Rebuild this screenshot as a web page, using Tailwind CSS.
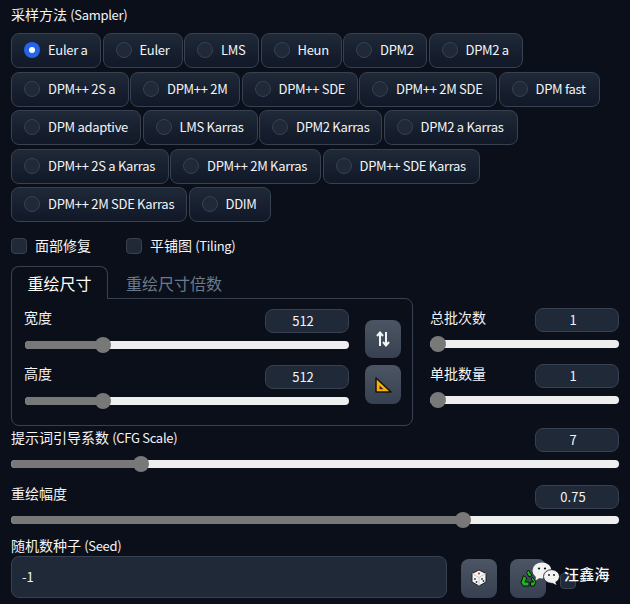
<!DOCTYPE html>
<html lang="zh-CN">
<head>
    <meta charset="UTF-8">
    <title>Sampler settings</title>
    <script src="https://cdn.jsdelivr.net/npm/@tailwindcss/browser@4"></script>
</head>
<body class="bg-[#0b0f19] text-[#f3f4f6] text-[14px] leading-[20px] font-['Noto_Sans_CJK_SC','Noto_Sans',sans-serif] overflow-hidden">
<div class="relative w-[630px] h-[604px] overflow-hidden pl-[11px] pr-[11px] pt-[4px]">

    <!-- Sampler -->
    <div class="h-[20px]">采样方法 <span class="text-[13px] tracking-[-0.3px]">(Sampler)</span></div>
    <div class="mt-[9px] flex flex-col gap-[3.5px] h-[189px] text-[13px] tracking-[-0.3px] whitespace-nowrap">
        <div class="flex gap-[1.5px]">
            <label class="w-[90px] h-[35px] flex items-center gap-[8px] pl-[12px] pb-[1px] rounded-[8px] border border-[#374151] bg-gradient-to-b from-[#1f2937] to-[#111827]"><span class="w-[16px] h-[16px] rounded-full bg-[#2563eb] flex items-center justify-center"><span class="w-[6px] h-[6px] rounded-full bg-white"></span></span>Euler a</label>
            <label class="w-[80px] h-[35px] flex items-center gap-[8px] pl-[12px] pb-[1px] rounded-[8px] border border-[#374151] bg-gradient-to-b from-[#1f2937] to-[#111827]"><span class="w-[16px] h-[16px] rounded-full bg-[#1f2937] border border-[#374151]"></span>Euler</label>
            <label class="w-[75px] h-[35px] flex items-center gap-[8px] pl-[12px] pb-[1px] rounded-[8px] border border-[#374151] bg-gradient-to-b from-[#1f2937] to-[#111827]"><span class="w-[16px] h-[16px] rounded-full bg-[#1f2937] border border-[#374151]"></span>LMS</label>
            <label class="w-[81px] h-[35px] flex items-center gap-[8px] pl-[12px] pb-[1px] rounded-[8px] border border-[#374151] bg-gradient-to-b from-[#1f2937] to-[#111827]"><span class="w-[16px] h-[16px] rounded-full bg-[#1f2937] border border-[#374151]"></span>Heun</label>
            <label class="w-[84px] h-[35px] flex items-center gap-[8px] pl-[12px] pb-[1px] rounded-[8px] border border-[#374151] bg-gradient-to-b from-[#1f2937] to-[#111827]"><span class="w-[16px] h-[16px] rounded-full bg-[#1f2937] border border-[#374151]"></span>DPM2</label>
            <label class="w-[94px] h-[35px] flex items-center gap-[8px] pl-[12px] pb-[1px] rounded-[8px] border border-[#374151] bg-gradient-to-b from-[#1f2937] to-[#111827]"><span class="w-[16px] h-[16px] rounded-full bg-[#1f2937] border border-[#374151]"></span>DPM2 a</label>
        </div>
        <div class="flex gap-[1.5px]">
            <label class="w-[117.5px] h-[35px] flex items-center gap-[8px] pl-[12px] pb-[1px] rounded-[8px] border border-[#374151] bg-gradient-to-b from-[#1f2937] to-[#111827]"><span class="w-[16px] h-[16px] rounded-full bg-[#1f2937] border border-[#374151]"></span>DPM++ 2S a</label>
            <label class="w-[110px] h-[35px] flex items-center gap-[8px] pl-[12px] pb-[1px] rounded-[8px] border border-[#374151] bg-gradient-to-b from-[#1f2937] to-[#111827]"><span class="w-[16px] h-[16px] rounded-full bg-[#1f2937] border border-[#374151]"></span>DPM++ 2M</label>
            <label class="w-[116px] h-[35px] flex items-center gap-[8px] pl-[12px] pb-[1px] rounded-[8px] border border-[#374151] bg-gradient-to-b from-[#1f2937] to-[#111827]"><span class="w-[16px] h-[16px] rounded-full bg-[#1f2937] border border-[#374151]"></span>DPM++ SDE</label>
            <label class="w-[138px] h-[35px] flex items-center gap-[8px] pl-[12px] pb-[1px] rounded-[8px] border border-[#374151] bg-gradient-to-b from-[#1f2937] to-[#111827]"><span class="w-[16px] h-[16px] rounded-full bg-[#1f2937] border border-[#374151]"></span>DPM++ 2M SDE</label>
            <label class="w-[101px] h-[35px] flex items-center gap-[8px] pl-[12px] pb-[1px] rounded-[8px] border border-[#374151] bg-gradient-to-b from-[#1f2937] to-[#111827]"><span class="w-[16px] h-[16px] rounded-full bg-[#1f2937] border border-[#374151]"></span>DPM fast</label>
        </div>
        <div class="flex gap-[1.5px]">
            <label class="w-[130px] h-[35px] flex items-center gap-[8px] pl-[12px] pb-[1px] rounded-[8px] border border-[#374151] bg-gradient-to-b from-[#1f2937] to-[#111827]"><span class="w-[16px] h-[16px] rounded-full bg-[#1f2937] border border-[#374151]"></span>DPM adaptive</label>
            <label class="w-[115px] h-[35px] flex items-center gap-[8px] pl-[12px] pb-[1px] rounded-[8px] border border-[#374151] bg-gradient-to-b from-[#1f2937] to-[#111827]"><span class="w-[16px] h-[16px] rounded-full bg-[#1f2937] border border-[#374151]"></span>LMS Karras</label>
            <label class="w-[123px] h-[35px] flex items-center gap-[8px] pl-[12px] pb-[1px] rounded-[8px] border border-[#374151] bg-gradient-to-b from-[#1f2937] to-[#111827]"><span class="w-[16px] h-[16px] rounded-full bg-[#1f2937] border border-[#374151]"></span>DPM2 Karras</label>
            <label class="w-[134px] h-[35px] flex items-center gap-[8px] pl-[12px] pb-[1px] rounded-[8px] border border-[#374151] bg-gradient-to-b from-[#1f2937] to-[#111827]"><span class="w-[16px] h-[16px] rounded-full bg-[#1f2937] border border-[#374151]"></span>DPM2 a Karras</label>
        </div>
        <div class="flex gap-[1.5px]">
            <label class="w-[157.5px] h-[35px] flex items-center gap-[8px] pl-[12px] pb-[1px] rounded-[8px] border border-[#374151] bg-gradient-to-b from-[#1f2937] to-[#111827]"><span class="w-[16px] h-[16px] rounded-full bg-[#1f2937] border border-[#374151]"></span>DPM++ 2S a Karras</label>
            <label class="w-[151px] h-[35px] flex items-center gap-[8px] pl-[12px] pb-[1px] rounded-[8px] border border-[#374151] bg-gradient-to-b from-[#1f2937] to-[#111827]"><span class="w-[16px] h-[16px] rounded-full bg-[#1f2937] border border-[#374151]"></span>DPM++ 2M Karras</label>
            <label class="w-[157px] h-[35px] flex items-center gap-[8px] pl-[12px] pb-[1px] rounded-[8px] border border-[#374151] bg-gradient-to-b from-[#1f2937] to-[#111827]"><span class="w-[16px] h-[16px] rounded-full bg-[#1f2937] border border-[#374151]"></span>DPM++ SDE Karras</label>
        </div>
        <div class="flex gap-[1.5px]">
            <label class="w-[176px] h-[35px] flex items-center gap-[8px] pl-[12px] pb-[1px] rounded-[8px] border border-[#374151] bg-gradient-to-b from-[#1f2937] to-[#111827]"><span class="w-[16px] h-[16px] rounded-full bg-[#1f2937] border border-[#374151]"></span>DPM++ 2M SDE Karras</label>
            <label class="w-[82px] h-[35px] flex items-center gap-[8px] pl-[12px] pb-[1px] rounded-[8px] border border-[#374151] bg-gradient-to-b from-[#1f2937] to-[#111827]"><span class="w-[16px] h-[16px] rounded-full bg-[#1f2937] border border-[#374151]"></span>DDIM</label>
        </div>
    </div>

    <!-- Checkboxes -->
    <div class="mt-[16px] h-[16px] flex items-center">
        <span class="w-[16px] h-[16px] rounded-[4px] bg-[#1f2937] border border-[#374151]"></span>
        <span class="ml-[8px] w-[91px] -mt-[2px]">面部修复</span>
        <span class="w-[16px] h-[16px] rounded-[4px] bg-[#1f2937] border border-[#374151]"></span>
        <span class="ml-[8px] -mt-[2px]">平铺图 <span class="text-[13px] tracking-[-0.3px]">(Tiling)</span></span>
    </div>

    <!-- Size tabs + batch -->
    <div class="mt-[12px] flex">
        <div class="w-[402px]">
            <div class="flex h-[33px] text-[16px]">
                <div class="relative z-10 w-[97px] h-[33px] rounded-t-[8px] border border-b-0 border-[#374151] bg-[#0b0f19] flex items-center justify-center text-white">重绘尺寸</div>
                <div class="w-[132px] flex items-center justify-center text-[#6b7a8c]">重绘尺寸倍数</div>
            </div>
            <div class="-mt-px h-[128px] rounded-b-[8px] rounded-tr-[8px] border border-[#374151] pl-[13px] pr-[11px] flex gap-[16px]">
                <div class="w-[324px] pt-[10px]">
                    <div class="flex justify-between h-[24px]">
                        <span class="-mt-[2px] -ml-[1px]">宽度</span>
                        <span class="w-[84px] h-[24px] rounded-[8px] bg-[#1f2937] border border-[#374151] flex items-center justify-center pr-[8px] text-[13px]">512</span>
                    </div>
                    <div class="mt-[4px] h-[16px] flex items-center">
                        <div class="relative w-full h-[8px] rounded-full bg-[#eeeeee]">
                            <div class="w-[78px] h-full rounded-l-full bg-[#787878]"></div>
                            <div class="absolute left-[70px] -top-[4px] w-[16px] h-[16px] rounded-full bg-[#787878]"></div>
                        </div>
                    </div>
                    <div class="mt-[12px] flex justify-between h-[24px]">
                        <span class="-mt-[2px] -ml-[1px]">高度</span>
                        <span class="w-[84px] h-[24px] rounded-[8px] bg-[#1f2937] border border-[#374151] flex items-center justify-center pr-[8px] text-[13px]">512</span>
                    </div>
                    <div class="mt-[4px] h-[16px] flex items-center">
                        <div class="relative w-full h-[8px] rounded-full bg-[#eeeeee]">
                            <div class="w-[78px] h-full rounded-l-full bg-[#787878]"></div>
                            <div class="absolute left-[70px] -top-[4px] w-[16px] h-[16px] rounded-full bg-[#787878]"></div>
                        </div>
                    </div>
                </div>
                <div class="pt-[21px] flex flex-col gap-[7px]">
                    <div class="w-[36px] h-[38px] rounded-[8px] bg-gradient-to-b from-[#4b5563] to-[#374151] flex items-center justify-center">
                        <svg width="14" height="16" viewBox="0 0 14 16" fill="none" stroke="#f3f4f6" stroke-width="2"><path d="M4 15V2M1 5 4 1.500 7 5"/><path d="M10 1V14M7 11 10 14.500 13 11"/></svg>
                    </div>
                    <div class="w-[36px] h-[39px] rounded-[8px] bg-gradient-to-b from-[#4b5563] to-[#374151] flex items-center justify-center">
                        <svg width="17" height="16" viewBox="0 0 17 16"><path d="M1 1 16 15H1Z" fill="#ffb000" stroke="#1a1405" stroke-width="1.500" stroke-linejoin="round"/><path d="M4.500 8.500 8.500 12.300H4.500Z" fill="#2a2a2a"/></svg>
                    </div>
                </div>
            </div>
        </div>
        <div class="ml-[17px] w-[189px] pt-[42px]">
            <div class="flex justify-between h-[24px]">
                <span class="-mt-[1px]">总批次数</span>
                <span class="w-[84px] h-[24px] rounded-[8px] bg-[#1f2937] border border-[#374151] flex items-center justify-center pr-[8px] text-[13px]">1</span>
            </div>
            <div class="mt-[4px] h-[16px] flex items-center">
                <div class="relative w-full h-[8px] rounded-full bg-[#eeeeee]">
                    <div class="absolute left-0 -top-[4px] w-[16px] h-[16px] rounded-full bg-[#787878]"></div>
                </div>
            </div>
            <div class="mt-[12px] flex justify-between h-[24px]">
                <span class="-mt-[1px]">单批数量</span>
                <span class="w-[84px] h-[24px] rounded-[8px] bg-[#1f2937] border border-[#374151] flex items-center justify-center pr-[8px] text-[13px]">1</span>
            </div>
            <div class="mt-[4px] h-[16px] flex items-center">
                <div class="relative w-full h-[8px] rounded-full bg-[#eeeeee]">
                    <div class="absolute left-0 -top-[4px] w-[16px] h-[16px] rounded-full bg-[#787878]"></div>
                </div>
            </div>
        </div>
    </div>

    <!-- CFG -->
    <div class="mt-[2px] flex justify-between h-[24px]">
        <span class="-mt-[1px]">提示词引导系数 <span class="text-[13px] tracking-[-0.3px]">(CFG Scale)</span></span>
        <span class="w-[84px] h-[24px] rounded-[8px] bg-[#1f2937] border border-[#374151] flex items-center justify-center pr-[8px] text-[13px]">7</span>
    </div>
    <div class="mt-[4px] h-[16px] flex items-center">
        <div class="relative w-full h-[8px] rounded-full bg-[#eeeeee]">
            <div class="w-[130px] h-full rounded-l-full bg-[#787878]"></div>
            <div class="absolute left-[122px] -top-[4px] w-[16px] h-[16px] rounded-full bg-[#787878]"></div>
        </div>
    </div>

    <!-- Denoising -->
    <div class="mt-[13px] flex justify-between h-[24px]">
        <span class="-mt-[2px]">重绘幅度</span>
        <span class="w-[84px] h-[24px] rounded-[8px] bg-[#1f2937] border border-[#374151] flex items-center justify-center pr-[8px] text-[13px]">0.75</span>
    </div>
    <div class="mt-[3px] h-[16px] flex items-center">
        <div class="relative w-full h-[8px] rounded-full bg-[#eeeeee]">
            <div class="w-[452px] h-full rounded-l-full bg-[#787878]"></div>
            <div class="absolute left-[444px] -top-[4px] w-[16px] h-[16px] rounded-full bg-[#787878]"></div>
        </div>
    </div>

    <!-- Seed -->
    <div class="mt-[7px] h-[20px]">随机数种子 <span class="text-[13px] tracking-[-0.3px]">(Seed)</span></div>
    <div class="mt-[1px] flex items-center">
        <div class="w-[436px] h-[42px] rounded-[8px] bg-[#1f2937] border border-[#374151] flex items-center pl-[10px] text-[13px] pb-[1px]">-1</div>
        <div class="ml-[14px] w-[36px] h-[39px] mt-[2px] rounded-[8px] bg-gradient-to-b from-[#4b5563] to-[#374151] flex items-center justify-center">
            <svg width="16" height="18" viewBox="0 0 16 18"><path d="M8 1 15 4.500V13L8 17 1 13V4.500Z" fill="#f5f5f5" stroke="#222" stroke-width="1"/><path d="M1 4.500 8 8.500 15 4.500M8 8.500V17" fill="none" stroke="#bbb" stroke-width="0.800"/><circle cx="8" cy="4.500" r="1.100" fill="#d33"/><circle cx="4" cy="10" r="0.900" fill="#333"/><circle cx="5.500" cy="13" r="0.900" fill="#333"/><circle cx="11" cy="10" r="0.900" fill="#333"/><circle cx="12.500" cy="12" r="0.900" fill="#333"/></svg>
        </div>
        <div class="ml-[13px] w-[36px] h-[39px] mt-[2px] rounded-[8px] bg-gradient-to-b from-[#4b5563] to-[#374151] flex items-center justify-center">
            <svg width="17" height="18" viewBox="0 0 17 18"><path d="M8.500 1 12 6.500 9 8 6.500 3.500Z" fill="#1fb51f" stroke="#04140a"/><path d="M3.500 6.500 6.800 9 5 13H9V17H3L1 13.500Z" fill="#1fb51f" stroke="#04140a"/><path d="M12.500 8 16 13 14 17H10.500V13H13.500L11 10Z" fill="#1fb51f" stroke="#04140a"/></svg>
        </div>
        <span class="ml-[14px] w-[16px] h-[16px] mt-[8px] rounded-[4px] bg-[#1f2937] border border-[#374151]"></span>
    </div>

    <!-- Watermark -->
    <div class="absolute left-[532px] top-[562px] flex items-center">
        <svg width="28" height="24" viewBox="0 0 28 24"><ellipse cx="10" cy="8.500" rx="9.500" ry="8" fill="#f2f2f2"/><path d="M4 14 3.500 18.500 9 15Z" fill="#f2f2f2"/><circle cx="7" cy="6.500" r="1.100" fill="#0b0f19"/><circle cx="13" cy="6.500" r="1.100" fill="#0b0f19"/><ellipse cx="19.500" cy="14.500" rx="8" ry="6.800" fill="#f2f2f2" stroke="#0b0f19" stroke-width="0.800"/><path d="M23 19.500 24.500 23 19.500 20.500Z" fill="#f2f2f2"/><circle cx="17" cy="13" r="0.900" fill="#0b0f19"/><circle cx="22" cy="13" r="0.900" fill="#0b0f19"/></svg>
        <span class="ml-[4px] text-[15px] text-white tracking-[0.2px] font-medium">汪鑫海</span>
    </div>
</div>
</body>
</html>
